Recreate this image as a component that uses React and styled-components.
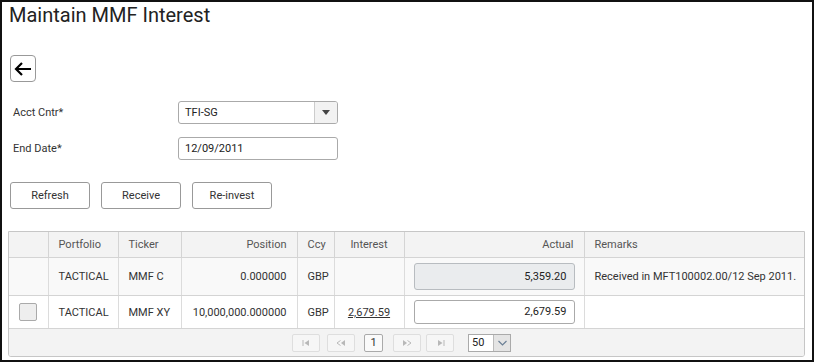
import React from 'react';
import styled, { createGlobalStyle } from 'styled-components';

const GlobalStyle = createGlobalStyle`
  body {
    margin: 0;
    background: #fff;
    font-family: Roboto, "Liberation Sans", Arial, sans-serif;
    color: #333;
  }
`;

const rows = [
  {
    id: 1,
    selectable: false,
    portfolio: 'TACTICAL',
    ticker: 'MMF C',
    position: '0.000000',
    ccy: 'GBP',
    interest: '',
    actual: '5,359.20',
    remarks: 'Received in MFT100002.00/12 Sep 2011.',
  },
  {
    id: 2,
    selectable: true,
    portfolio: 'TACTICAL',
    ticker: 'MMF XY',
    position: '10,000,000.000000',
    ccy: 'GBP',
    interest: '2,679.59',
    actual: '2,679.59',
    remarks: '',
  },
];

const columns = [
  { key: 'check', label: '', width: 39 },
  { key: 'portfolio', label: 'Portfolio', width: 70 },
  { key: 'ticker', label: 'Ticker', width: 63 },
  { key: 'position', label: 'Position', width: 116, align: 'right' },
  { key: 'ccy', label: 'Ccy', width: 37, align: 'center' },
  { key: 'interest', label: 'Interest', width: 70, align: 'center' },
  { key: 'actual', label: 'Actual', width: 180, align: 'right' },
  { key: 'remarks', label: 'Remarks' },
];

const App = () => {
  return (
    <>
      <GlobalStyle />
      <Frame>
        <Title>Maintain MMF Interest</Title>

        <BackButton aria-label="Back">
          <svg width="20" height="16" viewBox="0 0 20 16">
            <path d="M18 8H3M9 2L3 8l6 6" fill="none" stroke="#000" strokeWidth="2.2" />
          </svg>
        </BackButton>

        <Form>
          <FormRow>
            <Label>Acct Cntr*</Label>
            <Select>
              <span>TFI-SG</span>
              <SelectArrow>
                <svg width="8" height="5" viewBox="0 0 8 5">
                  <path d="M0 0h8L4 5z" fill="#444" />
                </svg>
              </SelectArrow>
            </Select>
          </FormRow>
          <FormRow>
            <Label>End Date*</Label>
            <TextInput>12/09/2011</TextInput>
          </FormRow>
        </Form>

        <Actions>
          <Button>Refresh</Button>
          <Button>Receive</Button>
          <Button>Re-invest</Button>
        </Actions>

        <Grid>
          <Table>
            <colgroup>
              {columns.map((c) => (
                <Col key={c.key} $w={c.width} />
              ))}
            </colgroup>
            <thead>
              <tr>
                {columns.map((c) => (
                  <Th key={c.key} $align={c.align}>
                    {c.label}
                  </Th>
                ))}
              </tr>
            </thead>
            <tbody>
              {rows.map((r) => (
                <Tr key={r.id} $shaded={!r.selectable} $h={r.selectable ? 33 : 38}>
                  <Td>{r.selectable && <Checkbox />}</Td>
                  <Td>{r.portfolio}</Td>
                  <Td>{r.ticker}</Td>
                  <Td $align="right">{r.position}</Td>
                  <Td $align="center">{r.ccy}</Td>
                  <Td $align="center">{r.interest && <Link>{r.interest}</Link>}</Td>
                  <Td $pad={9}>
                    <AmountInput $readOnly={!r.selectable}>{r.actual}</AmountInput>
                  </Td>
                  <Td>{r.remarks}</Td>
                </Tr>
              ))}
            </tbody>
          </Table>
          <Pager>
            <PageButton>
              <svg width="9" height="6" viewBox="0 0 9 6">
                <path d="M1 0v6" stroke="#b8b8b8" strokeWidth="1" />
                <path d="M7 0v6L2.5 3z" fill="#b8b8b8" />
              </svg>
            </PageButton>
            <PageButton $gap={7}>
              <svg width="10" height="6" viewBox="0 0 10 6">
                <path d="M4.5 0.5L1 3l3.5 2.5" fill="none" stroke="#b8b8b8" strokeWidth="1" />
                <path d="M9 0v6L5 3z" fill="#b8b8b8" />
              </svg>
            </PageButton>
            <PageNumber>1</PageNumber>
            <PageButton $gap={10}>
              <svg width="10" height="6" viewBox="0 0 10 6">
                <path d="M1 0v6L5 3z" fill="#b8b8b8" />
                <path d="M5.5 0.5L9 3 5.5 5.5" fill="none" stroke="#b8b8b8" strokeWidth="1" />
              </svg>
            </PageButton>
            <PageButton $gap={5}>
              <svg width="9" height="6" viewBox="0 0 9 6">
                <path d="M2 0v6L6.5 3z" fill="#b8b8b8" />
                <path d="M8 0v6" stroke="#b8b8b8" strokeWidth="1" />
              </svg>
            </PageButton>
            <PageSize>
              <span>50</span>
              <PageSizeArrow>
                <svg width="9" height="6" viewBox="0 0 9 6">
                  <path d="M0.5 1L4.5 5 8.5 1" fill="none" stroke="#6a7f95" strokeWidth="1.2" />
                </svg>
              </PageSizeArrow>
            </PageSize>
          </Pager>
        </Grid>
      </Frame>
    </>
  );
};

export default App;

// page frame
const Frame = styled.div`
  width: 814px;
  height: 362px;
  box-sizing: border-box;
  border: 2px solid #111;
  display: flex;
  flex-direction: column;
  align-items: flex-start;
  padding: 1px 7px 0 6px;
  font-size: 11px;
`;

// title
const Title = styled.h1`
  margin: 0 0 0 1px;
  font-size: 20px;
  line-height: 24px;
  font-weight: 400;
  color: #222;
`;

// back
const BackButton = styled.button`
  margin: 28px 0 0 2px;
  width: 26px;
  height: 27px;
  padding: 0;
  border: 1px solid #999;
  border-radius: 4px;
  background: #fff;
  display: flex;
  align-items: center;
  justify-content: center;
`;

// form
const Form = styled.div`
  margin-top: 19px;
  display: flex;
  flex-direction: column;
  gap: 13px;
`;

const FormRow = styled.div`
  display: flex;
  align-items: center;
  height: 23px;
`;

const Label = styled.div`
  width: 170px;
  box-sizing: border-box;
  padding-left: 5px;
  color: #333;
`;

const Select = styled.div`
  width: 160px;
  height: 23px;
  box-sizing: border-box;
  border: 1px solid #aaa;
  border-radius: 3px;
  display: flex;
  align-items: center;
  padding-left: 6px;
  color: #222;

  span {
    flex: 1;
  }
`;

const SelectArrow = styled.div`
  width: 22px;
  height: 100%;
  border-left: 1px solid #ccc;
  background: #f2f2f2;
  border-radius: 0 2px 2px 0;
  display: flex;
  align-items: center;
  justify-content: center;
`;

const TextInput = styled.div`
  width: 160px;
  height: 23px;
  box-sizing: border-box;
  border: 1px solid #aaa;
  border-radius: 3px;
  padding-left: 6px;
  line-height: 21px;
  color: #222;
`;

// actions
const Actions = styled.div`
  margin: 22px 0 0 2px;
  display: flex;
  gap: 11px;
`;

const Button = styled.button`
  width: 80px;
  height: 27px;
  box-sizing: border-box;
  border: 1px solid #999;
  border-radius: 3px;
  background: #fff;
  font-family: Roboto, "Liberation Sans", Arial, sans-serif;
  font-size: 11px;
  color: #333;
  padding: 0;
`;

// grid
const Grid = styled.div`
  margin-top: 22px;
  width: 797px;
  box-sizing: border-box;
  border: 1px solid #c6c6c6;
  border-radius: 0 0 3px 3px;
  overflow: hidden;
`;

const Table = styled.table`
  width: 100%;
  border-collapse: collapse;
  table-layout: fixed;
`;

const Col = styled.col`
  width: ${(p) => (p.$w ? `${p.$w}px` : 'auto')};
`;

const Th = styled.th`
  height: 25px;
  padding: 0 10px;
  background: #f3f3f3;
  border-left: 1px solid #d4d4d4;
  border-bottom: 1px solid #d4d4d4;
  font-weight: 400;
  color: #555;
  text-align: ${(p) => p.$align || 'left'};
  white-space: nowrap;

  &:first-child {
    border-left: none;
  }
`;

const Tr = styled.tr`
  height: ${(p) => p.$h}px;
  background: ${(p) => (p.$shaded ? '#f9f9f9' : '#fff')};
`;

const Td = styled.td`
  padding: 0 ${(p) => (p.$pad != null ? p.$pad : 10)}px;
  border-left: 1px solid #dcdcdc;
  border-bottom: 1px solid #d4d4d4;
  color: #333;
  text-align: ${(p) => p.$align || 'left'};
  white-space: nowrap;
  overflow: hidden;

  &:first-child {
    border-left: none;
  }
`;

const Checkbox = styled.div`
  width: 18px;
  height: 18px;
  box-sizing: border-box;
  border: 1px solid #aaa;
  border-radius: 2px;
  background: #eee;
`;

const Link = styled.span`
  text-decoration: underline;
  color: #333;
`;

const AmountInput = styled.div`
  height: ${(p) => (p.$readOnly ? 27 : 24)}px;
  box-sizing: border-box;
  border: 1px solid ${(p) => (p.$readOnly ? '#b8bcc0' : '#aaa')};
  border-radius: 3px;
  background: ${(p) => (p.$readOnly ? '#eaecee' : '#fff')};
  text-align: right;
  padding-right: 7px;
  line-height: ${(p) => (p.$readOnly ? 25 : 22)}px;
  color: #222;
`;

// pager
const Pager = styled.div`
  height: 27px;
  background: #f3f3f3;
  display: flex;
  align-items: center;
  justify-content: center;
  padding-right: 10px;
`;

const PageButton = styled.div`
  width: 28px;
  height: 18px;
  box-sizing: border-box;
  margin-left: ${(p) => p.$gap || 0}px;
  border: 1px solid #dedede;
  border-radius: 2px;
  background: #f6f6f6;
  display: flex;
  align-items: center;
  justify-content: center;
`;

const PageNumber = styled.div`
  width: 19px;
  height: 18px;
  box-sizing: border-box;
  margin-left: 9px;
  border: 1px solid #aaa;
  border-radius: 2px;
  background: #fafafa;
  display: flex;
  align-items: center;
  justify-content: center;
  color: #333;
`;

const PageSize = styled.div`
  margin-left: 14px;
  width: 43px;
  height: 18px;
  box-sizing: border-box;
  border: 1px solid #aaa;
  background: #fff;
  display: flex;
  align-items: center;
  padding-left: 3px;
  color: #222;

  span {
    flex: 1;
  }
`;

const PageSizeArrow = styled.div`
  width: 16px;
  height: 100%;
  border-left: 1px solid #bbb;
  background: #e4e4e4;
  display: flex;
  align-items: center;
  justify-content: center;
`;
